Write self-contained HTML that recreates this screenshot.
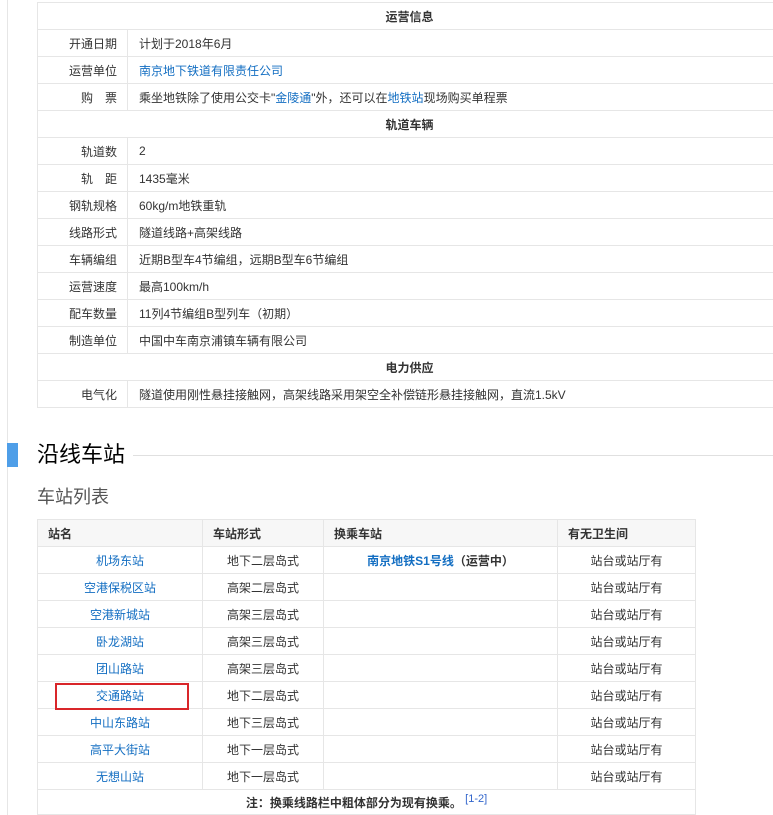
<!DOCTYPE html>
<html><head><meta charset="utf-8"><style>
body{margin:0;width:773px;height:815px;overflow:hidden;background:#fff;font-family:"Liberation Sans","Noto Sans CJK SC",sans-serif;font-size:12px;color:#333;position:relative}
.vl{position:absolute;left:7px;top:0;width:1px;height:815px;background:#e6e6e6}
table{border-collapse:collapse;position:absolute}
td,th{border:1px solid #e6e6e6;padding:0;height:26px}
#t1{left:37px;top:2px;width:745px}
#t1 td.l{width:90px;text-align:right;padding-right:10px;box-sizing:border-box}
#t1 td.v{padding-left:11px}
#t1 th{font-weight:bold;text-align:center;color:#333;font-size:12px}
a{color:#136ec2;text-decoration:none}
#t2{left:37px;top:519px}
#t2 th{background:#f7f7f7;text-align:left;padding-left:10px;font-weight:bold;height:26px}
#t2 td{text-align:center}
</style></head><body>
<div class="vl"></div>
<table id="t1">
<tr><th colspan="2">运营信息</th></tr>
<tr><td class="l">开通日期</td><td class="v">计划于2018年6月</td></tr>
<tr><td class="l">运营单位</td><td class="v"><a>南京地下铁道有限责任公司</a></td></tr>
<tr><td class="l">购　票</td><td class="v">乘坐地铁除了使用公交卡"<a>金陵通</a>"外，还可以在<a>地铁站</a>现场购买单程票</td></tr>
<tr><th colspan="2">轨道车辆</th></tr>
<tr><td class="l">轨道数</td><td class="v">2</td></tr>
<tr><td class="l">轨　距</td><td class="v">1435毫米</td></tr>
<tr><td class="l">钢轨规格</td><td class="v">60kg/m地铁重轨</td></tr>
<tr><td class="l">线路形式</td><td class="v">隧道线路+高架线路</td></tr>
<tr><td class="l">车辆编组</td><td class="v">近期B型车4节编组，远期B型车6节编组</td></tr>
<tr><td class="l">运营速度</td><td class="v">最高100km/h</td></tr>
<tr><td class="l">配车数量</td><td class="v">11列4节编组B型列车（初期）</td></tr>
<tr><td class="l">制造单位</td><td class="v">中国中车南京浦镇车辆有限公司</td></tr>
<tr><th colspan="2">电力供应</th></tr>
<tr><td class="l">电气化</td><td class="v">隧道使用刚性悬挂接触网，高架线路采用架空全补偿链形悬挂接触网，直流1.5kV</td></tr>
</table>
<div style="position:absolute;left:7px;top:443px;width:11px;height:24px;background:#4e9ee8"></div>
<div style="position:absolute;left:37px;top:441px;font-size:22px;color:#000;line-height:28px">沿线车站</div>
<div style="position:absolute;left:133px;top:455px;width:640px;height:1px;background:#e0e0e0"></div>
<div style="position:absolute;left:37px;top:485px;font-size:18px;color:#555;line-height:24px">车站列表</div>
<table id="t2">
<tr><th style="width:154px">站名</th><th style="width:110px">车站形式</th><th style="width:223px">换乘车站</th><th style="width:127px">有无卫生间</th></tr>
<tr><td><a>机场东站</a></td><td>地下二层岛式</td><td><b><a>南京地铁S1号线</a>（运营中）</b></td><td>站台或站厅有</td></tr>
<tr><td><a>空港保税区站</a></td><td>高架二层岛式</td><td></td><td>站台或站厅有</td></tr>
<tr><td><a>空港新城站</a></td><td>高架三层岛式</td><td></td><td>站台或站厅有</td></tr>
<tr><td><a>卧龙湖站</a></td><td>高架三层岛式</td><td></td><td>站台或站厅有</td></tr>
<tr><td><a>团山路站</a></td><td>高架三层岛式</td><td></td><td>站台或站厅有</td></tr>
<tr><td><a>交通路站</a></td><td>地下二层岛式</td><td></td><td>站台或站厅有</td></tr>
<tr><td><a>中山东路站</a></td><td>地下三层岛式</td><td></td><td>站台或站厅有</td></tr>
<tr><td><a>高平大街站</a></td><td>地下一层岛式</td><td></td><td>站台或站厅有</td></tr>
<tr><td><a>无想山站</a></td><td>地下一层岛式</td><td></td><td>站台或站厅有</td></tr>
<tr><td colspan="4" style="height:24px"><b>注：换乘线路栏中粗体部分为现有换乘。</b> <sup style="color:#3366cc;font-size:11px">[1-2]</sup></td></tr>
</table>
<div style="position:absolute;left:55px;top:683px;width:130px;height:23px;border:2px solid #d9262a"></div>
</body></html>
